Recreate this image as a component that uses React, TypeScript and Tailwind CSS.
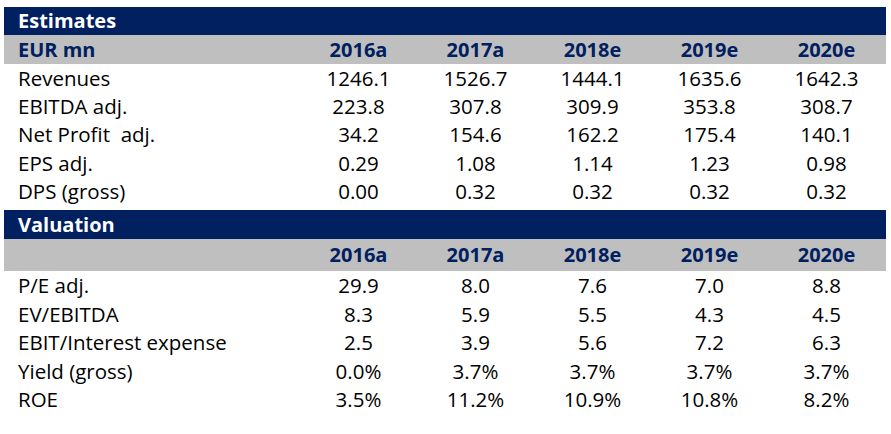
const years = ['2016a', '2017a', '2018e', '2019e', '2020e'];

const estimates: [string, string[]][] = [
  ['Revenues', ['1246.1', '1526.7', '1444.1', '1635.6', '1642.3']],
  ['EBITDA adj.', ['223.8', '307.8', '309.9', '353.8', '308.7']],
  ['Net Profit\u00a0 adj.', ['34.2', '154.6', '162.2', '175.4', '140.1']],
  ['EPS adj.', ['0.29', '1.08', '1.14', '1.23', '0.98']],
  ['DPS (gross)', ['0.00', '0.32', '0.32', '0.32', '0.32']],
];

const valuation: [string, string[]][] = [
  ['P/E adj.', ['29.9', '8.0', '7.6', '7.0', '8.8']],
  ['EV/EBITDA', ['8.3', '5.9', '5.5', '4.3', '4.5']],
  ['EBIT/Interest expense', ['2.5', '3.9', '5.6', '7.2', '6.3']],
  ['Yield (gross)', ['0.0%', '3.7%', '3.7%', '3.7%', '3.7%']],
  ['ROE', ['3.5%', '11.2%', '10.9%', '10.8%', '8.2%']],
];

const Row = ({ label, values, h }: { label: string; values: string[]; h: string }) => (
  <div className={`grid grid-cols-[296px_repeat(5,117px)] items-center text-black text-[20.5px] ${h}`}>
    <div className="pl-[14px] whitespace-pre">{label}</div>
    {values.map((v, i) => (
      <div key={i} className="text-center">
        {v}
      </div>
    ))}
  </div>
);

const App = () => {
  return (
    <div
      className="w-[891px] h-[434px] bg-white pt-[7px] pl-[4px] text-[20px] leading-none"
      style={{ fontFamily: '"Open Sans", "Noto Sans", sans-serif' }}
    >
      <div className="w-[882px]">
        {/* Estimates */}
        <div className="h-[28px] bg-[#002060] text-white font-bold flex items-center pl-[14px]">Estimates</div>
        <div className="h-[29px] bg-[#bfbfbf] text-[#002060] font-bold grid grid-cols-[296px_repeat(5,117px)] items-center">
          <div className="pl-[14px]">EUR mn</div>
          {years.map((y) => (
            <div key={y} className="text-center">
              {y}
            </div>
          ))}
        </div>
        {estimates.map(([label, values]) => (
          <Row key={label} label={label} values={values} h="h-[28.25px]" />
        ))}

        {/* Valuation */}
        <div className="mt-[5px] h-[29px] bg-[#002060] text-white font-bold flex items-center pl-[14px]">Valuation</div>
        <div className="h-[32px] bg-[#bfbfbf] text-[#002060] font-bold grid grid-cols-[296px_repeat(5,117px)] items-center">
          <div />
          {years.map((y) => (
            <div key={y} className="text-center">
              {y}
            </div>
          ))}
        </div>
        {valuation.map(([label, values]) => (
          <Row key={label} label={label} values={values} h="h-[28.5px]" />
        ))}
      </div>
    </div>
  );
};

export default App;
